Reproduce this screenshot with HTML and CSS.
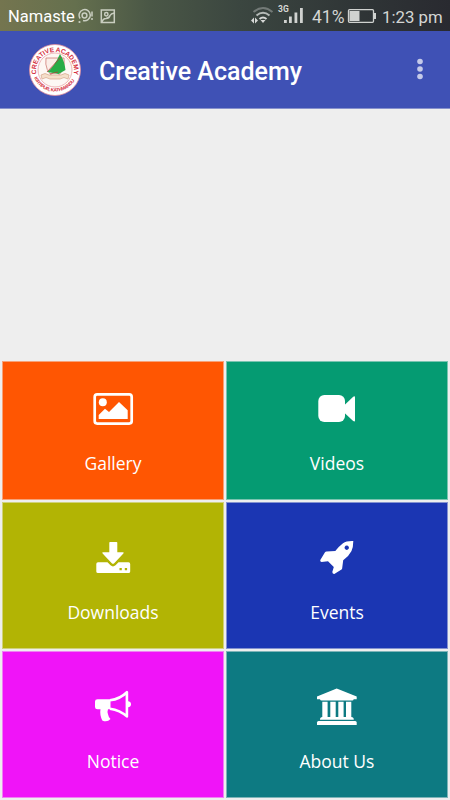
FILE: index.html
```html
<!DOCTYPE html>
<html lang="en">
<head>
	<meta charset="UTF-8">
	<title>Creative Academy</title>
	<link rel="stylesheet" href="styles.css">
</head>
<body>
	<div class="status">
		<span class="carrier">Namaste</span>
		<svg class="notify" width="40" height="18" viewBox="0 0 40 18">
			<g fill="none" stroke="#c9cec0" stroke-width="1.5">
				<path d="M2.200 10.500A5.600 5.600 0 1 1 5 12.500"/>
				<circle cx="6.500" cy="7.500" r="2.400"/>
				<path d="M14 3.500v5M14 10v2"/>
				<rect x="23.300" y="2" width="13" height="12.500"/>
				<circle cx="28.300" cy="6.300" r="1.700"/>
				<path d="M24 14q1-3.500 4-3.500 3.500-.5 4-3 1-2 4.500-2.500"/>
			</g>
			<circle cx="1.500" cy="14" r="1.100" fill="#c9cec0"/>
		</svg>
		<svg class="signal" width="54" height="24" viewBox="0 0 54 24">
			<g fill="none" stroke-width="2">
				<path d="M2.500 9q9.500-8 19 0" stroke="#737a77"/>
				<path d="M5.500 12.500q6.500-5.500 13 0" stroke="#b5bab7"/>
				<path d="M8.500 16q3.500-3 7 0" stroke="#d6d8d6"/>
			</g>
			<path d="M12 20l-2.500-3h5zM0 17.500l3-3v6zM7 17.500l-3-3v6z" fill="#d6d8d6"/>
			<text class="net" x="27" y="9">3G</text>
			<path d="M33 17h2.800v3H33zM38 13.500h2.800V20H38zM43.500 9.500h2.800V20h-2.800zM49 5h2.800v15H49z" fill="#d0d2d0"/>
		</svg>
		<span class="percent">41%</span>
		<svg class="battery" width="30" height="16" viewBox="0 0 30 16">
			<rect x="1.500" y="1.700" width="25" height="12.600" rx="1" fill="none" stroke="#d0d2d0" stroke-width="1.300"/>
			<path d="M2.500 3h10v10h-10zM27 5h2v6h-2z" fill="#d0d2d0"/>
		</svg>
		<span class="time">1:23 pm</span>
	</div>
	<div class="header">
		<svg class="logo" width="52" height="52" viewBox="0 0 52 52">
			<defs>
				<path id="arc-top" d="M8 33A19 19 0 1 1 44 33"/>
				<path id="arc-bottom" d="M3.800 30A22.800 22.800 0 0 0 48.200 30"/>
			</defs>
			<circle cx="26" cy="26" r="25.500" fill="#fff" stroke="#e58f9c" stroke-width=".8"/>
			<circle cx="26" cy="26" r="17" fill="#fdf8f4" stroke="#e8a5a5" stroke-width=".8"/>
			<text class="ring"><textPath href="#arc-top" textLength="66" startOffset="3">CREATIVE ACADEMY</textPath></text>
			<text class="ring small"><textPath href="#arc-bottom" textLength="50" startOffset="4">KIRTIPUR, KATHMANDU</textPath></text>
			<path d="M17 14h18q2 13-9 20Q15 27 17 14z" fill="#fbeee8" stroke="#cf7f78" stroke-width=".8"/>
			<path d="M31 10q4.500 7 5.500 16l-7 4-11-2q7-6 12.500-18z" fill="#28ad47"/>
			<path d="M18 28l14-15M21 30l8-2" stroke="#b23d38" stroke-width=".8"/>
			<path d="M12 31q4-3 8 0h12q4-3 8 0l-1 4q-4-3-8 0H21q-4-3-8 0z" fill="#f5dfca" stroke="#d5a58a" stroke-width=".7"/>
		</svg>
		<span class="title">Creative Academy</span>
		<svg class="more" width="8" height="24" viewBox="0 0 8 24">
			<circle cx="4" cy="4.500" r="2.800"/>
			<circle cx="4" cy="12" r="2.800"/>
			<circle cx="4" cy="19.500" r="2.800"/>
		</svg>
	</div>
	<div class="banner"></div>
	<div class="menu">
		<div class="item first gallery">
			<svg class="icon" viewBox="0 0 44 44">
				<rect x="3.700" y="7.400" width="37" height="29.200" rx="2.500" fill="none" stroke="#fff" stroke-width="2.700"/>
				<circle cx="11.800" cy="15.300" r="4"/>
				<path d="M7.700 32v-4l6.300-6.300 4 3.300 10-10 8.700 8.300V32z"/>
			</svg>
			<span>Gallery</span>
		</div>
		<div class="item first videos">
			<svg class="icon" viewBox="0 0 44 44">
				<rect x="3.300" y="8" width="26.700" height="27" rx="6"/>
				<path d="M29 18.500l9.200-8.800q1.800-1.200 1.800.5v23.300q0 1.700-1.800.5L29 25.500z"/>
			</svg>
			<span>Videos</span>
		</div>
		<div class="item downloads">
			<svg class="icon" viewBox="0 0 44 44">
				<path d="M19 7h6.500q.8 0 .8.800v9.500h5.400q1.800 0 .7 1.300l-9.200 9.600q-1.200 1.200-2.400 0l-9.200-9.600q-1.100-1.300.7-1.300h6V7.800q0-.8.700-.8z"/>
				<path fill-rule="evenodd" d="M7 27.300h9.500l3 3q2.500 2.200 5 0l3-3H37.500q1.700 0 1.700 1.700v7.500q0 1.600-1.700 1.600H7q-1.700 0-1.700-1.600V29q0-1.700 1.700-1.700zM28.500 33v2.200h2.300V33zM33.800 33v2.200h2.300V33z"/>
			</svg>
			<span>Downloads</span>
		</div>
		<div class="item events">
			<svg class="icon" viewBox="0 0 44 44">
				<path fill-rule="evenodd" d="M38.300 6Q31.500 5.700 28 8.200q-4 3-7.700 7.800L11.500 16.500q-1 0-1.500.8L5.300 25q-.6 1.700 1.200 1.900l6.500-.7 5.800 5.800-1.500 5q.2 2 2 1.900l7.200-4.300q.7-.5.700-1.500l1-7.800q5.800-4.300 8.300-9.300 1.800-4 1.800-10zM31.700 10.500a2.200 2.200 0 1 0 .1 0z"/>
			</svg>
			<span>Events</span>
		</div>
		<div class="item notice">
			<svg class="icon" viewBox="0 0 44 44">
				<path d="M6.500 15.300H19.500v10H17q-1 2.500 0 5 .3 2.300 2.500 4.800-3.500 3.600-8.200 1.300Q8.500 31 9.500 25.300h-3Q4 25.300 4 23v-5.400q0-2.300 2.500-2.300z"/>
				<path d="M19 16.300Q29 15 35.900 8.200v24.200Q29 26.200 19 24.700" fill="none" stroke="#fff" stroke-width="2.600" stroke-linejoin="round"/>
				<path d="M36.500 17q3.500.5 3.500 3.300t-3.500 3.200z"/>
			</svg>
			<span>Notice</span>
		</div>
		<div class="item about">
			<svg class="icon" viewBox="0 0 44 44">
				<path d="M2 12.500l19.700-8 20 8v2.700h-3q-.2 1.300-1.500 1.300H6.500q-1.300 0-1.500-1.300H2z"/>
				<path d="M7.300 17.700h5.300V33h2.700V17.700h5.400V33h2.600V17.700h5.300V33H31V17.700h5.300V33q2.500 0 2.500 2.700H5Q5 33 7.300 33z"/>
				<path d="M3.500 37h36.700q1.500 0 1.500 1.500V41H2v-2.500Q2 37 3.500 37z"/>
			</svg>
			<span>About Us</span>
		</div>
	</div>
</body>
</html>
```

FILE: styles.css
```css
body {
	margin: 0;
	width: 450px;
	height: 800px;
	overflow: hidden;
	background-color: #eee;
	font-family: Roboto, sans-serif;
}
svg {
	display: block;
	flex-shrink: 0;
}
.status {
	display: flex;
	align-items: center;
	box-sizing: border-box;
	height: 31px;
	padding: 2px 0 0 8px;
	background: linear-gradient(to right, #74754f 0, #65704e 75px, #4a5746 150px, #3b4640 240px, #303637 350px, #292a30 450px);
	color: #d4d6d4;
	font-size: 17.5px;
	white-space: nowrap;
}
.carrier {
	width: 70px;
	color: #fff;
	font-size: 16.5px;
}
.signal {
	margin: -3px 0 0 133px;
}
.net {
	fill: #d6d8d6;
	font-size: 8.5px;
	font-weight: bold;
}
.percent {
	width: 35px;
	margin-left: 7px;
}
.battery {
	margin-top: -2px;
}
.time {
	margin-left: 5px;
	font-size: 16.8px;
}
.header {
	display: flex;
	align-items: center;
	box-sizing: border-box;
	height: 78px;
	padding: 2px 26px 0 29px;
	background-color: #3f51b5;
	border-bottom: 1px solid #8791cc;
}
.logo {
	margin-top: -2px;
}
.ring {
	fill: #d52f3e;
	font: bold 6.6px "Liberation Sans", sans-serif;
}
.small {
	font-size: 4.8px;
}
.title {
	margin: 2px 0 0 18px;
	color: #fff;
	font-size: 25px;
	font-weight: 500;
	white-space: nowrap;
}
.more {
	margin: -4px 0 0 auto;
	fill: #c5cae9;
}
.banner {
	height: 252px;
}
.menu {
	display: grid;
	grid-template-columns: 222px 222px;
	grid-template-rows: 139px 147px 147px;
	gap: 2px;
	padding: 0 2px;
}
.item {
	display: flex;
	flex-direction: column;
	align-items: center;
	box-sizing: border-box;
	padding-top: 32px;
	border: 1px solid rgba(238, 238, 238, 0.5);
	color: #fff;
	font: 17.5px/26px "Open Sans", sans-serif;
}
.first {
	padding-top: 25px;
}
.icon {
	width: 44px;
	height: 44px;
	margin-bottom: 20px;
	fill: #fff;
}
.first .icon {
	margin-bottom: 19px;
}
.gallery {
	background-color: #ff5602;
}
.videos {
	background-color: #059b72;
}
.downloads {
	background-color: #b2b404;
}
.events {
	background-color: #1b36b3;
}
.notice {
	background-color: #f014f8;
}
.about {
	background-color: #0d7a82;
}
```
